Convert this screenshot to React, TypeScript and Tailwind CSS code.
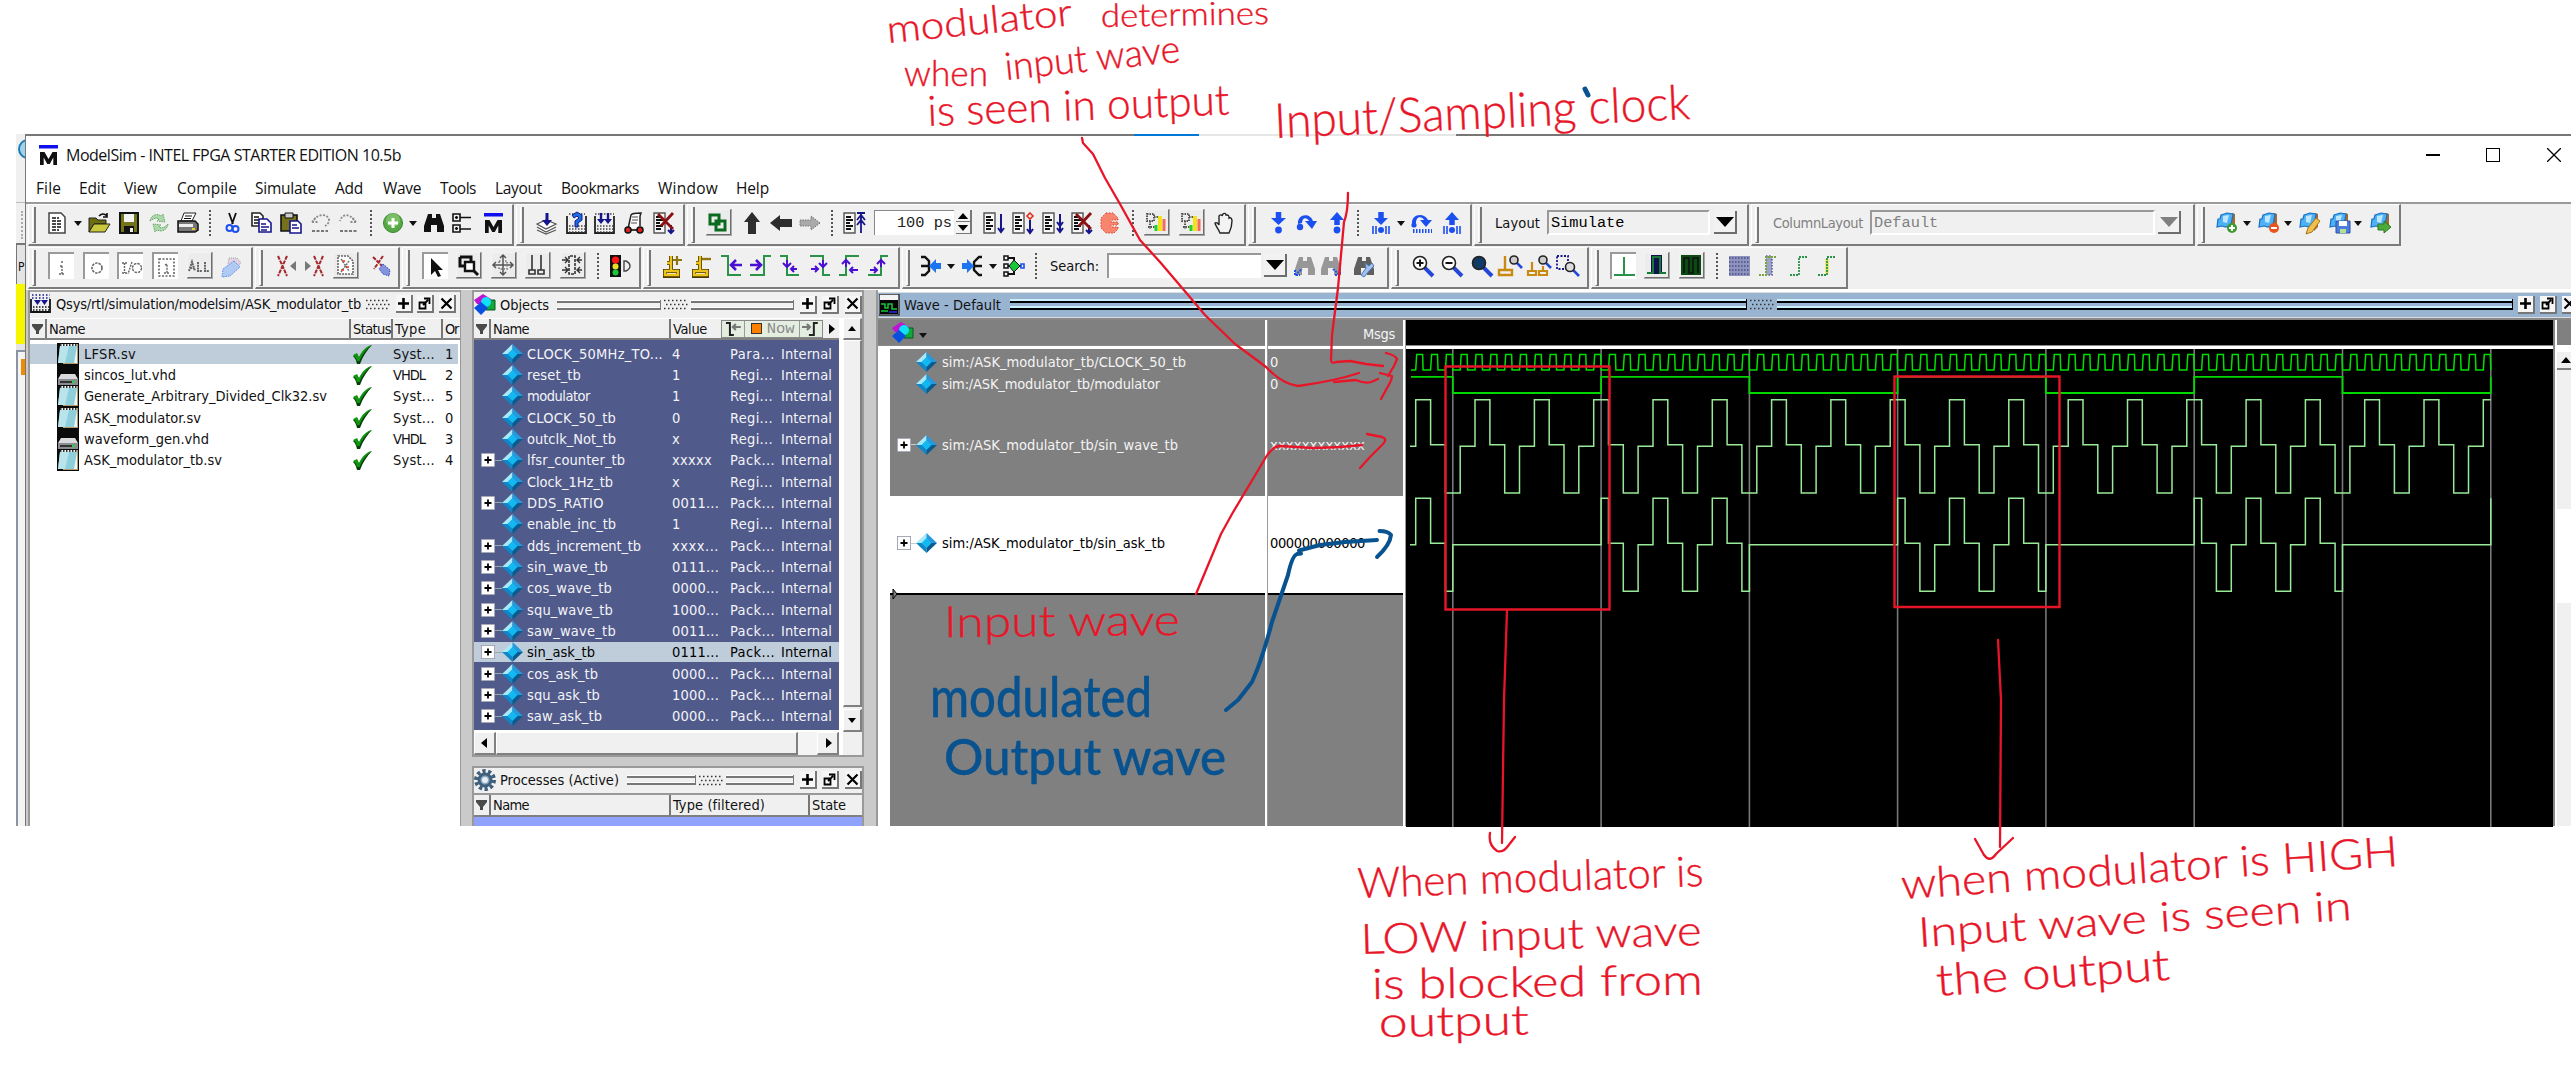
import { useLayoutEffect, useRef, useState } from "react";
import type { ReactNode } from "react";

/* Text whose tracking is tuned so that it fills a given width. */
function Fit({ w, children, className = "" }: { w: number; children: string; className?: string }) {
  const ref = useRef<HTMLSpanElement>(null);
  const [ls, setLs] = useState(0);
  useLayoutEffect(() => {
    if (ref.current) setLs((w - ref.current.getBoundingClientRect().width) / children.length);
  }, [w, children]);
  return (
    <span ref={ref} className={"inline-block whitespace-pre " + className} style={{ letterSpacing: ls }}>
      {children}
    </span>
  );
}

const Svg = ({ children, w = 22, h = 22 }: { children: ReactNode; w?: number; h?: number }) => (
  <svg width={w} height={h} viewBox={`0 0 ${w} ${h}`} fill="none" className="block shrink-0 overflow-visible">
    {children}
  </svg>
);
const P = ({ d, s = "#111", f = "none", w = 1.6, dash }: { d: string; s?: string; f?: string; w?: number; dash?: string }) => (
  <path d={d} stroke={s} fill={f} strokeWidth={w} strokeDasharray={dash} />
);
const NAVY = "#16168c";
const BLUE = "#1c4ff0";
const GRN = "#2b9348";
const PUR = "#4a0fd0";

const page = (
  <>
    <P d="M1 1H12V21H1Z" w={1.4} f="#f7f7f7" s="#555" />
    <P d="M3 5H8M3 8H10M3 11H7M3 14H10M3 17H8" w={2} />
  </>
);
const binoc = <path d="M5 2h4v4h4V2h4l4 12v6h-7v-7h-6v7H1v-6z" fill="#111" />;
const mag = (x: number, y: number, r: number, fill: string) => (
  <>
    <path d={`M${x + r * 0.6} ${y + r * 0.6}L${x + r * 2} ${y + r * 2}`} stroke="#2447d8" strokeWidth={r > 5 ? 4 : 2.6} />
    <circle cx={x} cy={y} r={r} fill={fill} stroke="#222" strokeWidth={1.6} />
  </>
);
const bookmark = (
  <>
    <path d="M17 1l3 1v13l-4 4V8z" fill="#a86a2c" />
    <path d="M6 3l6-2 6 1-2 11-5 2-4-1-5 1 1-8h2z" fill="#4db2f4" stroke="#1a6fc4" strokeWidth={1.2} />
    <path d="M8 4l6-1-2 8-4-1z" fill="#bfe6ff" />
  </>
);

const icons: Record<string, ReactNode> = {
  doc: (<><P d="M1 1H13L17 5V21H1Z" f="#fff" w={1.5} s="#444" /><P d="M4 6H11M4 9H14M4 12H13M4 15H14M4 18H11" w={1.5} dash="4 1" /></>),
  open: (<><path d="M1 6h7l2 2h8v4H6l-5 8z" fill="#6d6d10" stroke="#222" /><path d="M6 12h16l-5 8H1z" fill="#c8c83a" stroke="#222" /><P d="M11 4Q15 0 19 4M19 1V5H15" /></>),
  save: (<><path d="M1 1h18v20H1z" fill="#73731a" stroke="#111" strokeWidth={2} /><path d="M5 2h10v8H5z" fill="#f2f2f2" /><path d="M5 14h10v7H5z" fill="#111" /><path d="M11 16h3v4h-3z" fill="#eee" /></>),
  refresh: (<><path d="M2 9C3 3 9 1 13 4l2-2 2 8-8-1 2-2C8 5 5 7 2 9z" fill="#a9d8a9" stroke="#6aa36a" strokeDasharray="1.5 1" /><path d="M20 12c-1 7-7 8-11 6l-2 2-2-8 8 1-2 2c3 2 6 0 9-3z" fill="#a9d8a9" stroke="#6aa36a" strokeDasharray="1.5 1" /></>),
  print: (<><path d="M7 1h12l-4 8H4z" fill="#fff" stroke="#222" /><P d="M8 4H15M7 6.5H14" w={1} /><path d="M1 9h17l3 3v6l-3 2H1z" fill="#777" stroke="#111" strokeWidth={1.5} /><path d="M2 12h14v3H2z" fill="#eee" /><path d="M15 16h3v2h-3z" fill="#e8d02a" /></>),
  cut: (<><P d="M3 1L7 12M10 1L6 12" w={1.8} /><circle cx="3.500" cy="16" r="3" stroke={BLUE} strokeWidth="2" /><circle cx="9.500" cy="17" r="3" stroke={BLUE} strokeWidth="2" /></>),
  copy: (<><P d="M1 1H9L12 4V14H1Z" f="#fff" s="#222" /><P d="M3 5H8M3 8H9M3 11H8" w={1.3} /><P d="M8 7H16L20 11V20H8Z" f="#fff" s={NAVY} /><P d="M10 12H15M10 15H18M10 18H16" s={NAVY} w={1.3} /></>),
  paste: (<><path d="M1 3h16v16H1z" fill="#77701d" stroke="#111" strokeWidth={1.6} /><path d="M5 1h8v5H5z" fill="#ccc" stroke="#111" /><P d="M10 9H18L21 12V21H10Z" f="#fff" s={NAVY} /><P d="M12 13H17M12 16H19" s={NAVY} w={1.3} /></>),
  undo: (<><P d="M2 10L6 5M2 10H8M4 8C9 1 18 2 19 8C19 11 17 13 15 14" s="#888" dash="2 1.500" w={1.8} /><P d="M2 19H18" s="#777" dash="3 1.500" w={2} /></>),
  redo: (<><P d="M18 10L14 5M18 10H12M16 8C11 1 4 2 2 9" s="#888" dash="2 1.500" w={1.8} /><P d="M2 19H20" s="#777" dash="3 1.500" w={2} /></>),
  add: (<><circle cx="10" cy="11" r="9.500" fill="#57a844" stroke="#3a8632" /><circle cx="10" cy="8" r="7" fill="#8fd07c" opacity=".6" /><P d="M10 6V16M5 11H15" s="#fff" w={3} /></>),
  binoc,
  tree: (<><P d="M1 2H8V9H1ZM8 5.500H19M1 13H8V20H1ZM8 17H19M3 5.500H6M4.500 4V7M3 16.500H6M4.500 15V18" w={1.6} /></>),
  compile: (<><P d="M1 12L10 8L20 12L10 17ZM1 15L10 20L20 15M1 18L10 22L20 18" f="#fff" s="#555" w={1.2} /><P d="M11 1V11" s={NAVY} w={3} /><path d="M6 8h10l-5 6z" fill={NAVY} /></>),
  compall: (<><P d="M1 4V21H20V4" s="#222" w={1.8} /><P d="M3 14H19M3 17H19M3 20H19M3 2H19" w={1.6} s="#444" dash="1.500 1.500" /><path d="M6 3l5-3 5 3v5l-4 3v4H9V9l4-3-2-2-3 2z" fill="#1b6de0" stroke={NAVY} /></>),
  compdown: (<><P d="M1 4V21H20V4" s="#222" w={1.8} /><P d="M3 14H19M3 17H19M3 20H19M1 2H20" w={1.6} s="#444" dash="1.500 1.500" /><P d="M7 1V10M14 1V10" s={NAVY} w={2.4} /><path d="M3 7h8l-4 5zM10 7h8l-4 5z" fill={NAVY} /></>),
  glasses: (<><P d="M5 17L8 3Q9 1 18 1L17 4V14" f="#fff" s="#222" w={1.5} /><P d="M9 5H15M9 8H15M8 11H14" s="#888" /><circle cx="5" cy="18" r="3" fill="#d22" stroke="#111" strokeWidth="1.500" /><circle cx="17" cy="18" r="3" fill="#d22" stroke="#111" strokeWidth="1.500" /><P d="M8 18H14" /></>),
  brk: (<>{page}<P d="M18 13V21M15 18L18 21L21 18" s={NAVY} w={2} /><P d="M5 2L20 17M20 1L8 14" s="#8a1014" w={2.8} /></>),
  env: (<><P d="M3 4H12V13H3ZM9 10H18V19H9Z" s="#0a6b1e" w={3} /></>),
  up: <path d="M9 0l8 10h-4v12H5V10H1z" fill="#2d2d2d" />,
  left: <path d="M0 11L10 3v4h12v8H10v4z" fill="#2d2d2d" />,
  right: <path d="M21 11L12 4v4H1v6h11v4z" fill="#aaa" stroke="#777" strokeDasharray="1.500 1" />,
  restart: (<>{page}<P d="M18 2V21M14 8L18 3L22 8M14 13L18 8L22 13M14 1H22" s={NAVY} w={1.8} /></>),
  run: (<>{page}<P d="M18 2V20M15 16L18 20L21 16" s={NAVY} w={2} /></>),
  runc: (<>{page}<P d="M18 8V21M15 17L18 21L21 17" s={NAVY} w={2} /><P d="M18 1L21 4L18 7L15 4Z" s="#e0301e" /></>),
  runa: (<>{page}<P d="M18 2V20M15 10L18 14L21 10M15 16L18 20L21 16" s={NAVY} w={2} /></>),
  stop: <path d="M6 1h7l5 5v2h-7v2h7v3h-7v2h7v2l-4 4H6l-5-5V6z" fill="#f9856f" stroke="#d93c28" strokeDasharray="1.500 1.500" />,
  prof: (<><P d="M2 3H9V10H2ZM5 10V18M9 6H14M3 16H12" s="#555" dash="1.500 1" w={2} /><P d="M11 14V20" s="#22d422" w={3} /><P d="M15 5V20" s="#f1e21b" w={4} /><P d="M19 8V20" s="#f46a5c" w={3} /></>),
  hand: <path d="M6 21C4 16 1 13 1 11c1-1 3 0 4 2V4c1-2 3-1 3 0l1-2c1-1 3-1 3 1l1 0c2 0 2 1 2 3 2-1 3 1 3 3 0 5-1 8-3 12z" fill="#f3f3f3" stroke="#222" strokeWidth={1.4} />,
  stepin: (<><P d="M7.500 0V7" s={BLUE} w={5.5} /><path d="M0 6h15l-7.500 7z" fill={BLUE} /><circle cx="7.500" cy="18" r="3.400" fill={BLUE} /></>),
  stepover: (<><path d="M2 12C1 2 14 0 17 9h4l-5 8-7-8h4C11 5 6 5 6 11z" fill={BLUE} /><circle cx="4" cy="15" r="3.200" fill={BLUE} /></>),
  stepout: (<><P d="M7 13V6" s={BLUE} w={5.5} /><path d="M0 8h14L7 0z" fill={BLUE} /><circle cx="7" cy="18" r="3.400" fill={BLUE} /></>),
  stepin2: (<><P d="M9 0V7" s={BLUE} w={5.5} /><path d="M2 6h14l-7 7z" fill={BLUE} /><circle cx="9" cy="18" r="3" fill={BLUE} /><P d="M1 14V22M4 14V22M14 14V22M17 14V22" s={BLUE} /></>),
  stepover2: (<><path d="M2 12C1 2 14 0 18 8h4l-6 7-6-7h4C12 4 6 4 6 11z" fill={BLUE} /><circle cx="4" cy="13" r="2.600" fill={BLUE} /><P d="M3 19H22" s={BLUE} w={4} dash="1.500 1.500" /></>),
  stepout2: (<><P d="M9 13V6" s={BLUE} w={5.5} /><path d="M2 8h14L9 0z" fill={BLUE} /><circle cx="9" cy="18" r="3" fill={BLUE} /><P d="M1 14V22M4 14V22M14 14V22M17 14V22" s={BLUE} /></>),
  bmAdd: (<>{bookmark}<circle cx="17" cy="16" r="5" fill="#3f9a2f" /><P d="M17 13V19M14 16H20" s="#fff" w={1.8} /></>),
  bmDel: (<>{bookmark}<circle cx="17" cy="16" r="5" fill="#e8541c" /><P d="M14 16H20" s="#fff" w={2} /></>),
  bmEdit: (<>{bookmark}<path d="M18 6l4 3-8 11-6 2 2-6z" fill="#f0c04a" stroke="#a9741f" /></>),
  bmSave: (<>{bookmark}<path d="M8 9h14v12H8z" fill="#4a7fe0" stroke="#2b50a8" /><path d="M11 9h8v5h-8z" fill="#fff" /><path d="M12 17h6v4h-6z" fill="#b7e08c" /></>),
  bmGo: (<>{bookmark}<path d="M9 12h6V9l7 6-7 6v-3H9z" fill="#4dab3a" stroke="#2c7a20" /></>),
  fI: <P d="M10 6H12M11 10V18M9 10H12M8 18H14" s="#666" dash="2 1" w={1.4} />,
  fO: <circle cx="11" cy="12" r="5" stroke="#666" strokeWidth="1.600" strokeDasharray="2.500 1" />,
  fIO: (<><P d="M2 7H7M4.500 7V17M2 17H7M12 6L8 18" s="#666" dash="2 1" w={1.4} /><circle cx="17" cy="12" r="4.500" stroke="#666" strokeWidth="1.400" strokeDasharray="2.500 1" /></>),
  f1: (<><P d="M4 3H19V20H4Z" s="#666" dash="2 1.500" w={1.6} /><P d="M10 9L12 8V17M9 17H14" s="#666" dash="2 1" w={1.4} /></>),
  fAll: <P d="M1 17L4 8L7 17M2 14H6M10 8V17H14M17 8V17H21" s="#666" dash="2 .7" w={2} />,
  wand: (<><path d="M8 3h8l4 5-6 5-7-4z" fill="#e4cfe4" stroke="#9a9" strokeDasharray="1 1" /><path d="M13 6l6 6-10 9-8 1 1-8z" fill="#aecaf5" stroke="#5b8ee0" strokeDasharray="1.500 1" /></>),
  xl: (<><P d="M2 1L11 21M11 1L2 21" s="#a3262c" w={2} dash="4 1" /><path d="M20 6l-6 5 6 5z" fill="#777" /></>),
  xr: (<><P d="M10 1L19 21M19 1L10 21" s="#a3262c" w={2} dash="4 1" /><path d="M1 6l6 5-6 5z" fill="#777" /></>),
  xdoc: (<><P d="M4 2H14L19 7V20H4Z" f="#fff" s="#666" dash="2 1" /><P d="M7 5L15 17M15 7L7 18" s="#777" dash="2 1" /><P d="M8 7H11M12 13H15M7 16H10" s="#e0301e" /></>),
  xwand: (<><P d="M1 2L14 15M11 1L2 14" s="#a3262c" w={2} dash="4 1" /><path d="M11 9l7 6-1 6-6-2-4-5z" fill="#8593dc" stroke="#334bc0" strokeDasharray="1.500 1" /></>),
  cursor: <path d="M6 2v17l4-4 3 6 3-1-3-6h5z" fill="#111" />,
  zoomm: (<><P d="M3 3H14V12M3 3V12H8" w={3} /><P d="M8 8H17V17H8Z" w={2.4} f="#fff" /><P d="M17 17L21 21" w={3} /></>),
  pan: (<><P d="M11 1V21M1 11H21M8 4L11 1L14 4M8 18L11 21L14 18M4 8L1 11L4 14M18 8L21 11L18 14" s="#555" w={1.5} /><P d="M7 7H15V15H7Z" s="#777" dash="1.500 1.500" /></>),
  twoc: <P d="M6 1V16M15 1V16M3 16H9V20H3ZM12 16H18V20H12Z" s="#333" w={1.6} />,
  edge: (<><P d="M8 2V20H14V2Z" w={1.6} s="#333" dash="3 1" /><P d="M1 6H6M1 16H6M16 6H21M16 16H21M4 3L7 6L4 9M4 13L7 16L4 19M19 3L16 6L19 9M19 13L16 16L19 19" s="#333" w={1.4} /></>),
  traffic: (<><path d="M1 0h11v22H1z" fill="#111" /><circle cx="6.500" cy="5" r="3.600" fill="#ff1414" /><circle cx="6.500" cy="11.500" r="3" fill="#e6e02a" /><circle cx="6.500" cy="17.500" r="3" fill="#19c83a" /><P d="M15 6H17Q21 8 21 11Q21 14 17 16H15Z" s="#444" w={1.4} /></>),
  curAdd: (<><P d="M9 1V15M3 16H16V21H3ZM5 8H9" s="#4a3b00" w={4} /><P d="M9 1V15M3 16H16V20H3ZM5 8H9" s="#eec41c" w={2.4} /><P d="M15 1V10M11 5H20" s="#8f7410" w={2.2} /></>),
  curDel: (<><P d="M9 1V15M3 16H16V21H3ZM5 8H9" s="#4a3b00" w={4} /><P d="M9 1V15M3 16H16V20H3ZM5 8H9" s="#eec41c" w={2.4} /><P d="M11 4H20" s="#8f7410" w={2.4} /></>),
  e1: (<><P d="M0 1H7V20H20" s={GRN} w={2} /><P d="M21 10H11M15 5L10 10L15 15" s={PUR} w={2.6} /></>),
  e2: (<><P d="M1 20H15V1H22" s={GRN} w={2} /><P d="M1 10H11M7 5L12 10L7 15" s={PUR} w={2.6} /></>),
  e3: (<><P d="M1 1H8V20H20" s={GRN} w={2} /><P d="M8 5V12M4 8L8 12L12 8M18 14H12M15 11L12 14L15 17" s={PUR} w={2} /></>),
  e4: (<><P d="M1 1H14V20H21" s={GRN} w={2} /><P d="M14 5V12M10 8L14 12L18 8M2 14H9M6 11L9 14L6 17" s={PUR} w={2} /></>),
  e5: (<><P d="M1 20H8V1H21" s={GRN} w={2} /><P d="M8 12V5M4 9L8 5L12 9M20 15H12M15 12L12 15L15 18" s={PUR} w={2} /></>),
  e6: (<><P d="M1 20H14V1H21" s={GRN} w={2} /><P d="M14 12V5M10 9L14 5L18 9M3 15H10M7 12L10 15L7 18" s={PUR} w={2} /></>),
  b1: (<><P d="M1 2H5L9 6V16L5 20H1M1 11H9" w={2.4} /><path d="M21 8v6h-5v4l-7-7 7-7v4z" fill="#1c74f0" /></>),
  b2: (<><P d="M20 2H17L12 7V15L17 20H20M12 11H20" w={2.4} /><path d="M0 8v6h5v4l7-7-7-7v4z" fill="#1c74f0" /></>),
  b3: (<><P d="M5 3H11V19H5M5 11H18" w={2} /><P d="M1 1H5V5H1ZM1 17H5V21H1ZM1 9H5V13H1Z" w={1.5} /><P d="M18 9H21V13H18Z" s={BLUE} w={1.6} /><path d="M11 5l6 6-6 6-5-6z" fill="#19c83a" stroke="#111" /></>),
  bf1: (<><g opacity=".4">{binoc}</g><P d="M1 20L8 14M1 15V20H6" s={BLUE} w={2} dash="2 1" /></>),
  bf2: (<><g opacity=".4">{binoc}</g><P d="M13 14L20 20M20 14V20H15" s={BLUE} w={2} dash="2 1" /></>),
  bf3: (<><g opacity=".65">{binoc}</g><path d="M12 8l4 3 3-3 2 3-4 4-6 7-3-2 5-7z" fill="#9fc0f0" stroke="#5578b0" /></>),
  zin: (<>{mag(9, 8, 6.5, "#fff")}<P d="M9 4.500V11.500M5.500 8H12.500" w={2} /></>),
  zout: (<>{mag(9, 8, 6.5, "#fff")}<P d="M5.500 8H12.500" w={2} /></>),
  zfull: mag(9, 8, 6.5, "#123a66"),
  zc: (<>{mag(16, 5, 4, "#ccc")}<P d="M7 1V14M1 15H14V20H1Z" s="#c98a12" w={2.4} /></>),
  zc2: (<>{mag(16, 5, 4, "#ccc")}<P d="M5 7V15M16 11V15M1 16H9V20H1ZM12 16H20V20H12Z" s="#c98a12" w={2.2} /></>),
  zr: (<><P d="M1 1H12V14H1Z" s={NAVY} dash="2 1.500" w={1.8} />{mag(14, 12, 4.5, "#ddd")}</>),
  w1: <P d="M11 1V19M1 19H22" s={GRN} w={2} />,
  w2: (<><path d="M6 1h11v19H6z" fill="#12124d" /><P d="M2 19H8V3H15V19H21" s="#167a36" w={2} /></>),
  w3: (<><path d="M1 1h20v20H1z" fill="#0b4a12" /><P d="M4 19V4H9V19H13V4H18V19" s="#111" w={1.6} /></>),
  w4: (<><path d="M1 1h21v20H1z" fill="#8d93bd" /><P d="M1 3H22M1 7H22M1 11H22M1 15H22M1 19H22" s="#4b4f86" dash="1.500 1.500" /></>),
  w5: (<><P d="M8 1H14V20H8Z" s="#555a9a" f="#9da2c8" dash="1.500 1.500" /><P d="M1 20H8V2H19" s="#7aa33a" dash="2 1" w={2} /></>),
  w6: <P d="M1 20H10V2H19" s={GRN} dash="2 1" w={1.8} />,
  w7: (<><P d="M10 4V18" s="#e3dc2a" w={3} /><P d="M1 20H10V2H19" s={GRN} dash="2 1" w={1.8} /></>),
};

const Ic = ({ n }: { n: string }) => <Svg>{icons[n]}</Svg>;

const MLogo = () => (
  <Svg w={19} h={20}>
    <path d="M0 0h19v3.500H0z" fill="#1010ee" />
    <path d="M1 20V7h4.500l4 7 4-7H18v13h-3.700v-7.500L10.800 19H8.200l-3.500-6.500V20z" fill="#111" />
  </Svg>
);
const Caret = () => (
  <Svg w={7} h={22}>
    <path d="M0 9h8l-4 5z" fill="#111" />
  </Svg>
);
const Sep = () => <div className="h-[26px] w-0 border-l-2 border-dotted border-[#555]" />;
const Raised = ({ n, on }: { n: string; on?: boolean }) => (
  <div
    className={
      on
        ? "flex h-[27px] w-[26px] items-center justify-center border-l-2 border-t-2 border-[#9a9a9a] bg-white"
        : "flex h-[27px] w-[26px] items-center justify-center border-b-2 border-r-2 border-b-[#6e6e6e] border-r-[#6e6e6e] bg-[#ececec] outline outline-1 -outline-offset-1 outline-white/40"
    }
  >
    <Ic n={n} />
  </div>
);
const DropBtn = ({ off }: { off?: boolean }) => (
  <div className="flex h-[23px] w-[23px] items-center justify-center border-b-2 border-r-2 border-[#6e6e6e] bg-[#f2f2f2]">
    <svg width="18" height="10" viewBox="0 0 18 10">
      <path d="M0 0h18L9 10z" fill={off ? "#808080" : "#000"} />
    </svg>
  </div>
);

type Item = [number, number, ReactNode];

/* A toolbar strip with a grip; items are [left, width, node] and flow left to right. */
function Strip({ x, w, items }: { x: number; w: number; items: Item[] }) {
  let end = x + 8;
  return (
    <div
      className="mr-[2px] flex h-[42px] shrink-0 items-center border-b-2 border-r-2 border-l border-t border-b-[#7b7b7b] border-r-[#7b7b7b] border-l-white border-t-white bg-[#f0f0f0]"
      style={{ width: w }}
    >
      <div className="ml-[3px] h-[36px] w-[4px] border-b border-l border-r-2 border-b-[#777] border-l-white border-r-[#777]" />
      {items.map(([ix, iw, node], i) => {
        const ml = ix - end;
        end = ix + iw;
        return (
          <div key={i} className="flex shrink-0 items-center -translate-y-[2px]" style={{ marginLeft: ml, width: iw }}>
            {node}
          </div>
        );
      })}
    </div>
  );
}
const ic = (x: number, n: string): Item => [x, 22, <Ic n={n} />];
const caret = (x: number): Item => [x, 7, <Caret />];
const sep = (x: number): Item => [x, 2, <Sep />];
const btn = (x: number, n: string, on?: boolean): Item => [x, 26, <Raised n={n} on={on} />];

const row1: { x: number; w: number; items: Item[] }[] = [
  { x: 28, w: 486, items: [ic(48, "doc"), caret(74), ic(88, "open"), ic(119, "save"), ic(148, "refresh"), ic(177, "print"), sep(209), ic(226, "cut"), ic(251, "copy"), ic(280, "paste"), ic(310, "undo"), ic(338, "redo"), sep(370), ic(383, "add"), caret(409), ic(423, "binoc"), ic(452, "tree"), [484, 19, <MLogo />]] },
  { x: 516, w: 169, items: [ic(536, "compile"), ic(566, "compall"), ic(594, "compdown"), ic(623, "glasses"), ic(653, "brk")] },
  {
    x: 687, w: 559,
    items: [
      btn(706, "env"), ic(743, "up"), ic(770, "left"), ic(799, "right"), sep(831), ic(843, "restart"),
      [874, 80, <div className="flex h-[25px] w-[80px] items-center justify-end border-l border-t border-[#888] bg-white pr-[2px] font-[Liberation_Mono,monospace] text-[15.300px] text-[#222]">100 ps</div>],
      [956, 16, (
        <div className="flex h-[25px] w-[16px] flex-col">
          {["M1 8h12L7 1z", "M1 1h12L7 8z"].map((d) => (
            <div key={d} className="flex h-[12px] w-[16px] items-center justify-center border-b border-r-2 border-[#777] bg-[#f4f4f4]">
              <svg width="12" height="8" viewBox="0 0 14 9"><path d={d} fill="#000" /></svg>
            </div>
          ))}
        </div>
      )],
      ic(983, "run"), ic(1012, "runc"), ic(1042, "runa"), ic(1071, "brk"), ic(1100, "stop"), sep(1132), btn(1144, "prof"), btn(1179, "prof"), ic(1214, "hand"),
    ],
  },
  { x: 1248, w: 224, items: [ic(1271, "stepin"), ic(1296, "stepover"), ic(1330, "stepout"), sep(1357), ic(1372, "stepin2"), caret(1397), ic(1410, "stepover2"), ic(1443, "stepout2")] },
  {
    x: 1474, w: 275,
    items: [
      [1495, 45, <Fit w={45}>Layout</Fit>],
      [1547, 163, <div className="flex h-[25px] w-[163px] items-center border-2 border-b-white border-l-[#999] border-r-white border-t-[#999] pl-[2px] font-[Liberation_Mono,monospace] text-[15.300px] text-black">Simulate</div>],
      [1714, 23, <DropBtn />],
    ],
  },
  {
    x: 1751, w: 444,
    items: [
      [1773, 90, <Fit w={90} className="text-[#808080]">ColumnLayout</Fit>],
      [1870, 285, <div className="flex h-[25px] w-[285px] items-center border-2 border-b-white border-l-[#999] border-r-white border-t-[#999] pl-[2px] font-[Liberation_Mono,monospace] text-[15.300px] text-[#808080]">Default</div>],
      [2158, 23, <DropBtn off />],
    ],
  },
  { x: 2197, w: 204, items: [ic(2215, "bmAdd"), caret(2243), ic(2257, "bmDel"), caret(2284), ic(2298, "bmEdit"), ic(2328, "bmSave"), caret(2354), ic(2369, "bmGo")] },
];
const row2: { x: number; w: number; items: Item[] }[] = [
  { x: 28, w: 225, items: [btn(48, "fI", true), btn(83, "fO", true), btn(117, "fIO", true), btn(152, "f1", true), btn(187, "fAll"), ic(221, "wand")] },
  { x: 255, w: 145, items: [ic(276, "xl"), ic(304, "xr"), btn(333, "xdoc"), ic(372, "xwand")] },
  { x: 402, w: 239, items: [btn(422, "cursor", true), btn(456, "zoomm"), btn(491, "pan"), btn(525, "twoc"), btn(560, "edge"), sep(597), ic(609, "traffic")] },
  { x: 643, w: 257, items: [ic(662, "curAdd"), ic(691, "curDel"), ic(721, "e1"), ic(749, "e2"), ic(779, "e3"), ic(809, "e4"), ic(838, "e5"), ic(867, "e6")] },
  {
    x: 902, w: 487,
    items: [
      ic(920, "b1"), caret(947), ic(962, "b2"), caret(989), ic(1003, "b3"), sep(1035),
      [1050, 49, <Fit w={49}>Search:</Fit>],
      [1107, 154, <div className="h-[25px] w-[154px] border-l-2 border-t-2 border-[#999] bg-white" />],
      [1264, 23, <DropBtn />],
      ic(1294, "bf1"), ic(1320, "bf2"), ic(1353, "bf3"),
    ],
  },
  { x: 1391, w: 198, items: [ic(1411, "zin"), ic(1440, "zout"), ic(1470, "zfull"), ic(1498, "zc"), ic(1527, "zc2"), ic(1556, "zr")] },
  { x: 1591, w: 257, items: [btn(1610, "w1", true), btn(1644, "w2"), btn(1679, "w3"), sep(1716), ic(1728, "w4"), ic(1758, "w5"), ic(1789, "w6"), ic(1817, "w7")] },
];

const menus: [string, number, number][] = [
  ["File", 36, 25], ["Edit", 79, 27], ["View", 124, 33], ["Compile", 177, 60], ["Simulate", 255, 61], ["Add", 335, 28],
  ["Wave", 383, 38], ["Tools", 440, 36], ["Layout", 495, 47], ["Bookmarks", 561, 78], ["Window", 658, 60], ["Help", 736, 33],
];

/* ---- dock panel parts ---- */
const DockBtn = ({ d, lead }: { d: "plus" | "float" | "x"; lead: string }) => (
  <div className={"flex h-[18px] w-[17px] shrink-0 items-center justify-center border-b-2 border-r-2 border-[#777] bg-[#f6f6f6] " + lead}>
    <svg width="13" height="13" viewBox="0 0 13 13" fill="none" stroke="#000">
      {d === "plus" && <path d="M6.500 1V12M1 6.500H12" strokeWidth="2.600" />}
      {d === "float" && <path d="M1.500 5.500H7.500V11.500H1.500ZM5 8L10 3M6 1.500H11.500V7" strokeWidth="1.800" />}
      {d === "x" && <path d="M1.500 1.500L11.500 11.500M11.500 1.500L1.500 11.500" strokeWidth="2.200" />}
    </svg>
  </div>
);
const Rails = () => (
  <div className="flex h-[10px] flex-1 flex-col justify-between border-r border-[#777]">
    <div className="h-[3px] border-b-2 border-t border-b-[#777] border-t-white" />
    <div className="h-[3px] border-b-2 border-t border-b-[#777] border-t-white" />
  </div>
);
const Dots = () => (
  <svg width="24" height="11" viewBox="0 0 24 11" className="mx-[3px] shrink-0">
    <path d="M0 1.500H24M2 5.500H24M0 9.500H24" stroke="#333" strokeWidth="1.500" strokeDasharray="1.500 2.500" />
  </svg>
);
const ShapesIcon = () => (
  <Svg w={22} h={21}>
    <path d="M9 0l8 5-4 5H3L0 6z" fill="#c014d4" />
    <path d="M12 6h9v10h-9z" fill="#12a83c" stroke="#055a1c" />
    <circle cx="12" cy="8" r="5" fill="#12e0f4" />
    <path d="M7 8l7 6-7 7-7-7z" fill="#0a50e0" />
  </Svg>
);
const GearIcon = () => (
  <Svg w={22} h={22}>
    <circle cx="11" cy="11" r="9" stroke="#3f5f7d" strokeWidth="4" strokeDasharray="3.200 2.450" />
    <circle cx="11" cy="11" r="6" fill="#8aa9c4" stroke="#3f5f7d" strokeWidth="3" />
    <circle cx="11" cy="11" r="3" fill="#e8eef4" />
  </Svg>
);
const FilterCell = () => (
  <div className="flex h-full w-[17px] shrink-0 items-center justify-center border-r-2 border-[#777]">
    <svg width="11" height="10" viewBox="0 0 11 10"><path d="M0 0h11v2L7 7v3H4V7L0 2z" fill="#4a4a4a" /></svg>
  </div>
);
const Diamond = () => (
  <svg width="21" height="20" viewBox="0 0 21 20" className="block shrink-0">
    <path d="M10.500 0L0 10H6L10.500 5.500Z" fill="#a6e9fb" />
    <path d="M10.500 0L21 10H15L10.500 5.500Z" fill="#2599dc" />
    <path d="M10.500 20L0 10H6L10.500 14.500Z" fill="#0f86c6" />
    <path d="M10.500 20L21 10H15L10.500 14.500Z" fill="#0a5c90" />
    <path d="M10.500 5L15.500 10L10.500 15L5.500 10Z" fill="#12b8f2" />
  </svg>
);
const PlusBox = () => (
  <svg width="14" height="14" viewBox="0 0 14 14" className="block shrink-0">
    <path d="M0 0H14V14H0Z" fill="#fdfdfd" stroke="#8a8fa0" strokeWidth="1.500" />
    <path d="M7 3.500V10.500M3.500 7H10.500" stroke="#000" strokeWidth="1.800" />
  </svg>
);
const FileIcon = ({ vhd }: { vhd?: boolean }) => (
  <svg width="22" height="22" viewBox="0 0 22 22" className="block shrink-0">
    <path d="M0 0h22v22H0z" fill="#0a0a0a" />
    {vhd ? (
      <>
        <path d="M4 10h14l3 5H1z" fill="#d9d9de" />
        <path d="M1 15h20v6H1z" fill="#8b8b92" />
        <path d="M3 17h14v2H3z" fill="#333" />
        <path d="M15 16.500h2.500v2.500H15z" fill="#2bd53d" />
      </>
    ) : (
      <>
        <path d="M3 1h18v20H6z" fill="#b59a6a" />
        <path d="M3 1h17v19H6z" fill="#f1f4f4" />
        <path d="M3 3h17l-3 17H1z" fill="#8fcfdc" />
        <path d="M3 3h9l-4 17H1z" fill="#b9e4ec" />
        <path d="M3 2H20" stroke="#333" strokeWidth="2" strokeDasharray="1.500 1.500" />
      </>
    )}
  </svg>
);
const Check = () => (
  <svg width="21" height="20" viewBox="0 0 21 20" className="block">
    <path d="M1 12L5 10L7 14C10 8 14 3 20 1C15 6 11 12 8 20H5C4 16 3 14 1 12Z" fill="#0a3d0e" />
    <path d="M1 11L5 9L7 13C10 7 14 2 20 1C14 5 10 11 7.500 17H5C4 14 3 12 1 11Z" fill="#0f960f" />
  </svg>
);
const Arrow = ({ d }: { d: string }) => (
  <svg width="10" height="10" viewBox="0 0 10 10"><path d={d} fill="#000" /></svg>
);
const SB = "flex items-center justify-center border-b-2 border-r-2 border-l border-t border-b-[#808080] border-r-[#808080] border-l-white border-t-white bg-[#f0f0f0] ";

const files: [string, number, boolean, string, string][] = [
  ["LFSR.sv", 52, false, "Syst...", "1"],
  ["sincos_lut.vhd", 92, true, "VHDL", "2"],
  ["Generate_Arbitrary_Divided_Clk32.sv", 243, false, "Syst...", "5"],
  ["ASK_modulator.sv", 117, false, "Syst...", "0"],
  ["waveform_gen.vhd", 125, true, "VHDL", "3"],
  ["ASK_modulator_tb.sv", 138, false, "Syst...", "4"],
];
const objs: [string, number, string, string, boolean][] = [
  ["CLOCK_50MHz_TO...", 136, "4", "Para...", false],
  ["reset_tb", 54, "1", "Regi...", false],
  ["modulator", 63, "1", "Regi...", false],
  ["CLOCK_50_tb", 89, "0", "Regi...", false],
  ["outclk_Not_tb", 89, "x", "Regi...", false],
  ["lfsr_counter_tb", 98, "xxxxx", "Pack...", true],
  ["Clock_1Hz_tb", 86, "x", "Regi...", false],
  ["DDS_RATIO", 77, "0011...", "Pack...", true],
  ["enable_inc_tb", 89, "1", "Regi...", false],
  ["dds_increment_tb", 114, "xxxx...", "Pack...", true],
  ["sin_wave_tb", 81, "0111...", "Pack...", true],
  ["cos_wave_tb", 85, "0000...", "Pack...", true],
  ["squ_wave_tb", 86, "1000...", "Pack...", true],
  ["saw_wave_tb", 89, "0011...", "Pack...", true],
  ["sin_ask_tb", 68, "0111...", "Pack...", true],
  ["cos_ask_tb", 71, "0000...", "Pack...", true],
  ["squ_ask_tb", 73, "1000...", "Pack...", true],
  ["saw_ask_tb", 75, "0000...", "Pack...", true],
];
const valW = (v: string) => (v.length === 1 ? 8 : v.length === 5 ? 40 : 47);

function ProjectPanel() {
  return (
    <div className="flex w-[433px] shrink-0 flex-col border-l-2 border-r border-l-[#999] border-r-[#999] bg-white">
      <div className="flex h-[28px] items-center border-t-2 border-[#a5a5a5] bg-[#f0f0f0] pb-[2px]">
        <Svg w={21} h={20}>
          <P d="M1 5V18H20V5" w={1.8} /><P d="M3 13H19M3 16H19" dash="1.500 1.500" /><P d="M2 1H20M2 4H20" s={NAVY} dash="1.500 2" w={1.5} /><path d="M4 6h7l-3.500 5zM11 6h7l-3.500 5z" fill={NAVY} />
        </Svg>
        <Fit w={305} className="ml-[5px] mr-[2px]">Qsys/rtl/simulation/modelsim/ASK_modulator_tb</Fit>
        <Dots />
        <DockBtn d="plus" lead="ml-[3px]" /><DockBtn d="float" lead="ml-[4px]" /><DockBtn d="x" lead="ml-[5px]" />
      </div>
      <div className="flex h-[22px] items-center border-b-2 border-t border-b-[#808080] border-t-white bg-[#f0f0f0]">
        <FilterCell />
        <div className="h-full w-[304px] shrink-0 border-r-2 border-[#777] pl-[2px]"><Fit w={36}>Name</Fit></div>
        <div className="h-full w-[42px] shrink-0 border-r-2 border-[#777] pl-[2px]"><Fit w={38}>Status</Fit></div>
        <div className="h-full w-[50px] shrink-0 border-r-2 border-[#777] pl-[2px]"><Fit w={31}>Type</Fit></div>
        <div className="h-full pl-[2px]"><Fit w={13}>Or</Fit></div>
      </div>
      <div className="pt-[3px]">
        {files.map(([name, w, vhd, type, n], i) => (
          <div key={name} className="flex h-[21.330px] items-center">
            <div className={"mr-[2px] flex h-[20px] flex-1 items-center pl-[27px] " + (i === 0 ? "bg-[#bfcddb]" : "")}>
              <FileIcon vhd={vhd} />
              <div className="w-[273px] shrink-0 pl-[5px]"><Fit w={w}>{name}</Fit></div>
              <div className="w-[41px] shrink-0"><Check /></div>
              <div className="w-[52px] shrink-0"><Fit w={type === "VHDL" ? 32 : 42}>{type}</Fit></div>
              <Fit w={8}>{n}</Fit>
            </div>
          </div>
        ))}
      </div>
    </div>
  );
}

function ObjectsPanel() {
  return (
    <div className="flex h-[467px] flex-col border-2 border-[#999] bg-white">
      <div className="flex h-[26px] shrink-0 items-center bg-[#f0f0f0] pb-px">
        <ShapesIcon />
        <Fit w={49} className="ml-[4px] mr-[8px]">Objects</Fit>
        <Rails /><Dots /><Rails />
        <DockBtn d="plus" lead="ml-[6px]" /><DockBtn d="float" lead="ml-[5px]" /><DockBtn d="x" lead="ml-[6px]" />
      </div>
      <div className="flex flex-1">
        <div className="flex w-[365px] shrink-0 flex-col">
          <div className="flex h-[22px] items-center border-b-2 border-t border-b-[#808080] border-t-white bg-[#f0f0f0]">
            <FilterCell />
            <div className="h-full w-[180px] border-r-2 border-[#777] pl-[2px]"><Fit w={36}>Name</Fit></div>
            <div className="w-[50px] pl-[2px]"><Fit w={34}>Value</Fit></div>
            <div className="flex h-[18px] w-[102px] items-center border border-[#888] bg-[#e3eee0]">
              <svg width="22" height="16" viewBox="0 0 22 16" fill="none" stroke="#222"><path d="M4 2H8V14H12" strokeWidth="2" /><path d="M19 6H12M14 3L11 6L14 9" strokeWidth="2.200" stroke="#777" /></svg>
              <div className="flex h-full w-[57px] items-center border-l border-r border-[#999] pl-[6px]">
                <div className="h-[11px] w-[11px] border border-[#333] bg-[#ff8000]" />
                <span className="ml-[5px] font-[Liberation_Mono,monospace] text-[15.500px] text-[#8a8a8a]">Now</span>
              </div>
              <svg width="22" height="16" viewBox="0 0 22 16" fill="none" stroke="#222"><path d="M9 14H14V2H18" strokeWidth="2" /><path d="M2 6H9M7 3L10 6L7 9" strokeWidth="2.200" stroke="#777" /></svg>
            </div>
            <div className="ml-[5px]"><Arrow d="M1 0L7 5L1 10Z" /></div>
          </div>
          <div className="h-[390px] bg-[#505a8b] pt-[3px] text-[#f4f4f8]">
            {objs.map(([name, w, val, type, plus]) => (
              <div key={name} className="flex h-[21.330px] items-center">
                <div className={"flex h-[20px] flex-1 items-center " + (name === "sin_ask_tb" ? "bg-[#bfcddb] text-black" : "")}>
                  <div className="flex w-[28px] shrink-0 items-center pl-[7px]">
                    {plus && <><PlusBox /><div className="h-px flex-1 bg-[#9aa]" /></>}
                  </div>
                  <Diamond />
                  <div className="w-[149px] shrink-0 pl-[4px]"><Fit w={w}>{name}</Fit></div>
                  <div className="w-[58px] shrink-0"><Fit w={valW(val)}>{val}</Fit></div>
                  <div className="w-[51px] shrink-0"><Fit w={type === "Regi..." ? 43 : 45}>{type}</Fit></div>
                  <Fit w={51}>Internal</Fit>
                </div>
              </div>
            ))}
          </div>
          <div className="mt-[2px] flex h-[23px] bg-[#f4f4f4]">
            <div className={SB + "w-[22px]"}><Arrow d="M7 0L1 5L7 10Z" /></div>
            <div className={SB + "w-[302px]"} />
            <div className="flex-1" />
            <div className={SB + "w-[22px]"}><Arrow d="M3 0L9 5L3 10Z" /></div>
          </div>
        </div>
        <div className="ml-[4px] flex flex-1 flex-col bg-[#f0f0f0]">
          <div className={SB + "h-[22px]"}><Arrow d="M1 7L5 2L9 7Z" /></div>
          <div className={SB + "h-[367px]"} />
          <div className={SB + "mt-[2px] h-[23px]"}><Arrow d="M1 3L5 8L9 3Z" /></div>
        </div>
      </div>
    </div>
  );
}

function ProcessesPanel() {
  return (
    <div className="mt-[9px] flex h-[60px] flex-col border-2 border-b-0 border-[#999] bg-white">
      <div className="flex h-[25px] items-center bg-[#f0f0f0] pb-px">
        <GearIcon />
        <Fit w={119} className="ml-[4px] mr-[8px]">Processes (Active)</Fit>
        <Rails /><Dots /><Rails />
        <DockBtn d="plus" lead="ml-[6px]" /><DockBtn d="float" lead="ml-[5px]" /><DockBtn d="x" lead="ml-[6px]" />
      </div>
      <div className="flex h-[24px] items-center border-b-2 border-t-2 border-b-[#808080] border-t-[#999] bg-[#f0f0f0]">
        <FilterCell />
        <div className="h-full w-[180px] border-r-2 border-[#777] pl-[2px]"><Fit w={36}>Name</Fit></div>
        <div className="h-full w-[139px] border-r-2 border-[#777] pl-[2px]"><Fit w={92}>Type (filtered)</Fit></div>
        <div className="pl-[2px]"><Fit w={34}>State</Fit></div>
      </div>
      <div className="flex-1 bg-[#8ea2fe]" />
    </div>
  );
}

/* ---- waveforms ---- */
const OX = 1406;
const OY = 348;
const G0 = 1452.8;
const GP = 148.28;
const CK = 14.828;
const END = G0 + 7 * GP;
const grid = Array.from({ length: 8 }, (_, k) => G0 + k * GP);
const pt = (x: number, y: number) => `${(x - OX).toFixed(1)} ${(y - OY).toFixed(1)}`;

function clockPath() {
  let d = `M${pt(1411, 369)}`;
  for (let x = G0 - 2.5 * CK; x < END; x += CK) {
    d += `L${pt(x, 369)}L${pt(x + 1, 353.5)}L${pt(x + CK / 2 - 0.5, 353.5)}L${pt(x + CK / 2, 369)}`;
  }
  return d;
}
function modPath() {
  let d = `M${pt(1411, 375.8)}`;
  let y = 375.8;
  grid.forEach((x) => {
    d += `L${pt(x, y)}`;
    y = y < 380 ? 392 : 375.8;
    d += `L${pt(x, y)}`;
  });
  return d;
}
const level = (x: number) => {
  const m = Math.floor((x - (G0 - 2.5 * CK)) / CK + 0.001);
  return m < 0 ? 3 : m % 4;
};
function sinePath(ys: number[], masked: boolean) {
  const edges = [1410, END];
  for (let x = G0 - 2.5 * CK; x < END; x += CK) edges.push(x);
  if (masked) edges.push(...grid);
  edges.sort((a, b) => a - b);
  let d = "";
  for (let i = 0; i < edges.length - 1; i++) {
    const mid = (edges[i] + edges[i + 1]) / 2;
    const low = masked && mid > G0 && Math.floor((mid - G0) / GP) % 2 === 0;
    const y = low ? ys[3] : ys[level(mid)];
    d += `${d ? "L" : "M"}${pt(edges[i], y)}L${pt(edges[i + 1], y)}`;
  }
  if (masked) d += `L${pt(END, ys[0])}`;
  return d;
}

const Waves = () => (
  <svg width="1147" height="478" viewBox="0 0 1147 478" fill="none" className="block bg-black">
    {grid.map((x) => (
      <path key={x} d={`M${pt(x, 348)}V478`} stroke="#777" strokeWidth="1.600" />
    ))}
    <path d={clockPath()} stroke="#00e000" strokeWidth="1.500" />
    <path d={modPath()} stroke="#00d800" strokeWidth="1.800" />
    <path d={sinePath([398.7, 443.7, 492, 445.3], false)} stroke="#98ea98" strokeWidth="1.500" />
    <path d={sinePath([497.3, 542.3, 590.3, 543.7], true)} stroke="#98ea98" strokeWidth="1.500" />
  </svg>
);

const Signal = ({ name, w, plus, cls }: { name: string; w: number; plus?: boolean; cls: string }) => (
  <div className={"flex items-center pl-[7px] " + cls}>
    <div className="flex w-[19px] shrink-0 items-center">{plus && <><PlusBox /><div className="h-px flex-1 bg-[#ccc]" /></>}</div>
    <Diamond />
    <Fit w={w} className="ml-[5px]">{name}</Fit>
  </div>
);

function WavePanel() {
  return (
    <div className="flex min-w-0 flex-1 flex-col border-l-2 border-[#999] bg-white">
      <div className="mt-[2px] flex h-[26px] shrink-0 items-center border-y border-[#ddd] bg-[#99b4d1] pb-px">
        <svg width="21" height="22" viewBox="0 0 21 22" className="ml-px shrink-0">
          <path d="M0 0h20v21H0z" fill="#f4f4f4" stroke="#333" strokeWidth="1.500" />
          <path d="M1 6h18v14H1z" fill="#050505" />
          <path d="M2 10h4v4h3v-4h4v5h5M2 17h7" stroke="#19c83a" strokeWidth="1.500" fill="none" />
          <path d="M10 18h8" stroke="#2a2af0" strokeWidth="1.500" />
        </svg>
        <Fit w={97} className="ml-[4px] mr-[9px]">Wave - Default</Fit>
        <WaveRails /><Dots /><WaveRails />
        <DockBtn d="plus" lead="ml-[5px]" /><DockBtn d="float" lead="ml-[5px]" />
        <div className="w-[14px] shrink-0 overflow-hidden"><DockBtn d="x" lead="ml-[5px]" /></div>
      </div>
      <div className="h-[2px] shrink-0 bg-[#888]" />
      <div className="flex min-h-0 flex-1 text-[#f4f4f4]">
        <div className="flex w-[387px] shrink-0 flex-col">
          <div className="flex h-[25px] shrink-0 items-center bg-[#808080] pl-[14px]"><ShapesIcon /><div className="ml-[5px] pt-[4px]"><Caret /></div></div>
          <div className="h-[4px] shrink-0 border-t border-[#888] bg-white" />
          <div className="ml-[12px] flex flex-1 flex-col">
            <div className="h-[147px] bg-[#808080]">
              <Signal name="sim:/ASK_modulator_tb/CLOCK_50_tb" w={244} cls="h-[25px]" />
              <Signal name="sim:/ASK_modulator_tb/modulator" w={218} cls="h-[20px]" />
              <Signal name="sim:/ASK_modulator_tb/sin_wave_tb" w={236} plus cls="h-[101px]" />
            </div>
            <Signal name="sim:/ASK_modulator_tb/sin_ask_tb" w={223} plus cls="h-[97px] bg-white pb-[3px] text-black" />
            <div className="relative flex-1 border-t-2 border-black bg-[#808080]">
              <svg width="6" height="10" viewBox="0 0 6 10" className="absolute -top-[6px] left-[2px]"><path d="M1 0L5 5L1 10Z" fill="#808080" stroke="#000" /></svg>
            </div>
          </div>
        </div>
        <div className="w-[3px] shrink-0 border-r border-[#999] bg-white" />
        <div className="flex w-[135px] shrink-0 flex-col">
          <div className="flex h-[25px] shrink-0 items-center justify-end bg-[#808080] pr-[8px] pt-[3px]"><Fit w={32}>Msgs</Fit></div>
          <div className="h-[4px] shrink-0 border-t border-[#888] bg-white" />
          <div className="flex h-[147px] flex-col bg-[#808080] pl-[2px]">
            <div className="flex h-[25px] items-center"><Fit w={8}>0</Fit></div>
            <div className="flex h-[20px] items-center"><Fit w={8}>0</Fit></div>
            <div className="flex h-[101px] items-center"><Fit w={95}>xxxxxxxxxxxx</Fit></div>
          </div>
          <div className="flex h-[97px] items-center bg-white pb-[3px] pl-[2px] text-black"><Fit w={95}>000000000000</Fit></div>
          <div className="flex-1 border-t-2 border-black bg-[#808080]" />
        </div>
        <div className="w-[3px] shrink-0 border-r border-[#999] bg-white" />
        <div className="w-[1147px] shrink-0">
          <div className="h-[25px] bg-black" />
          <div className="h-[4px] border-t border-[#888] bg-white" />
          <Waves />
        </div>
        <div className="w-[4px] shrink-0 border-l-2 border-[#888] bg-white" />
        <div className="flex flex-1 flex-col bg-[#f0f0f0]">
          <div className="h-[25px] bg-[#808080]" />
          <div className="h-[7px] bg-white" />
          <div className="flex h-[18px] items-center justify-center border-b-2 border-[#808080] bg-[#f0f0f0] pl-[4px]"><Arrow d="M0 8L5 2L10 8Z" /></div>
          <div className="mt-[139px] h-[94px] bg-white" />
        </div>
      </div>
    </div>
  );
}
const WaveRails = () => (
  <div className="flex h-[11px] flex-1 flex-col justify-between border-r border-black">
    <div className="h-[4px] border-b-2 border-t-2 border-b-black border-t-[#cdeefc]" />
    <div className="h-[4px] border-b-2 border-t-2 border-b-black border-t-[#cdeefc]" />
  </div>
);

/* ---- pen notes laid over the page ---- */
const RED = "#e81528";
const INK = "#07528f";
const notes: [string, number, number, number, number, number, string][] = [
  ["modulator", 888, 43, 186, 38, -5.5, RED],
  ["determines", 1101, 27, 168, 32, -1, RED],
  ["when", 904, 86, 84, 36, 0, RED],
  ["input wave", 1006, 80, 176, 38, -6, RED],
  ["is seen in output", 928, 126, 302, 42, -2.2, RED],
  ["Input/Sampling clock", 1275, 138, 416, 48, -2.6, RED],
  ["Input wave", 944, 637, 236, 43, -0.5, RED],
  ["When modulator is", 1358, 898, 346, 42, -2, RED],
  ["LOW input wave", 1361, 954, 341, 42, -1.5, RED],
  ["is blocked from", 1372, 999, 331, 42, -0.8, RED],
  ["output", 1379, 1037, 150, 42, -1, RED],
  ["when modulator is HIGH", 1902, 899, 498, 42, -3.8, RED],
  ["Input wave is seen in", 1919, 947, 434, 41, -3.6, RED],
  ["the output", 1937, 996, 234, 44, -4, RED],
  ["modulated", 930, 717, 222, 56, 0, INK],
  ["Output wave", 944, 775, 282, 50, 0, INK],
];
const red = [
  "M1082 138L1083 143L1093 154L1105 178L1120 204L1140 240L1160 262L1183 289L1205 315L1235 344L1250 355L1266 367Q1282 384 1298 386Q1335 381 1359 373",
  "M1334 382L1356 380Q1366 384 1371 382L1378 379M1380 373L1392 376Q1392 380 1387 388L1381 399",
  "M1348 193Q1348 212 1344 222L1338 288L1332 335L1331 360Q1331 364 1336 362L1350 361L1366 364L1383 366M1386 353Q1395 355 1397 359L1394 366L1388 376",
  "M1196 594L1221 534L1232 514L1266 457Q1273 446 1280 446L1313 448L1340 447L1362 445M1367 434L1382 437Q1388 439 1383 444L1370 457L1360 468",
  "M1507 610L1504 700L1502 843M1490 833Q1488 845 1497 851Q1503 853 1508 846L1515 837",
  "M1998 640L2001 700L2000 847M1975 839L1984 855Q1990 863 1996 854L2013 838",
];

const Notes = () => (
  <svg width="2571" height="1084" viewBox="0 0 2571 1084" fill="none" strokeLinecap="round" strokeLinejoin="round" className="absolute inset-0">
    {red.map((d) => (
      <path key={d} d={d} stroke={RED} strokeWidth="2.300" />
    ))}
    <path d="M1445.500 366.500H1609.500V609.500H1445.500ZM1894.500 376.500H2059.500V607H1894.500Z" stroke={RED} strokeWidth="2.400" strokeLinejoin="miter" />
    <path d="M1226 710L1238 700L1252 682Q1262 660 1272 622L1288 575Q1292 556 1297 554L1301 553.500M1299 550.500L1320 545L1345 542L1377 540" stroke={INK} strokeWidth="4" />
    <path d="M1379.500 531Q1388 531 1391 535Q1390 545 1377 557" stroke={INK} strokeWidth="4" />
    <path d="M1585 89L1588 95" stroke={INK} strokeWidth="5" />
    {notes.map(([t, x, y, w, size, rot, c]) => (
      <text
        key={t}
        x={x}
        y={y}
        textLength={w}
        lengthAdjust="spacingAndGlyphs"
        fontSize={size}
        fill={c}
        stroke={c}
        strokeWidth={0.4}
        transform={`rotate(${rot} ${x} ${y})`}
        className={c === INK ? "font-[Lato,sans-serif] font-medium" : "font-[Lato,sans-serif] font-light"}
      >
        {t}
      </text>
    ))}
  </svg>
);

export default function App() {
  let mEnd = 26;
  return (
    <div className="relative h-[1084px] w-[2571px] overflow-hidden bg-white pl-[16px] pt-[134px] font-[DejaVu_Sans_Condensed,DejaVu_Sans,sans-serif] text-[14.500px] leading-[20px] text-[#111] [font-stretch:condensed]">
      <div className="flex h-[692px]">
        {/* window behind */}
        <div className="flex w-[10px] shrink-0 flex-col overflow-hidden border-r border-[#777] bg-[#f0f0f0] [font-stretch:normal]">
          <div className="h-[68px] shrink-0 pl-[2px] pt-[5px]"><div className="h-[20px] w-[20px] rounded-full border-2 border-[#1d7fb0] bg-[#9fd3ec]" /></div>
          <div className="h-[41px] shrink-0 border-t border-[#bbb] pl-[5px] pt-[8px]"><div className="h-[28px] border-l-2 border-dotted border-[#aaa]" /></div>
          <div className="h-[41px] shrink-0 border-l border-t-2 border-[#777] bg-[#e4e4e4] pl-px pt-[12px] text-[12px]">P</div>
          <div className="h-[60px] shrink-0 bg-[#f6f600]" />
          <div className="h-[8px] shrink-0 border-b-2 border-[#8a94a4] bg-[#e4e4e4]" />
          <div className="flex-1 border-l-2 border-[#8a94a4] bg-[#f4f4f4] pl-[3px] pt-[7px]"><div className="h-[16px] bg-[#f08a00]" /></div>
        </div>

        {/* simulator window */}
        <div className="flex min-w-0 flex-1 flex-col bg-white">
          <div className="flex h-[2px] shrink-0">
            <div className="w-[1108px] bg-[#777]" /><div className="w-[65px] bg-[#0078d7]" /><div className="w-[257px] bg-[#e6e6e6]" /><div className="flex-1 bg-[#777]" />
          </div>
          <div className="flex h-[38px] shrink-0 items-center pl-[13px] font-[Open_Sans,sans-serif] text-[16px] [font-stretch:normal]">
            <MLogo />
            <Fit w={335} className="ml-[8px]">ModelSim - INTEL FPGA STARTER EDITION 10.5b</Fit>
            <div className="ml-auto flex items-center pr-[10px]">
              <div className="h-[1.500px] w-[14px] bg-black" />
              <div className="ml-[46px] h-[14px] w-[14px] border-[1.500px] border-black" />
              <svg className="ml-[47px]" width="14" height="14" viewBox="0 0 14 14"><path d="M0 0L14 14M14 0L0 14" stroke="#000" strokeWidth="1.300" /></svg>
            </div>
          </div>
          <div className="flex h-[28px] shrink-0 items-center font-[Open_Sans,sans-serif] text-[15.500px] [font-stretch:normal]">
            {menus.map(([t, x, w]) => {
              const ml = x - mEnd;
              mEnd = x + w;
              return (
                <div key={t} className="shrink-0" style={{ marginLeft: ml, width: w }}><Fit w={w}>{t}</Fit></div>
              );
            })}
          </div>
          <div className="h-[2px] shrink-0 bg-[#9a9a9a]" />
          <div className="flex h-[42px] shrink-0 bg-[#f0f0f0] pl-[2px]">{row1.map((g) => <Strip key={g.x} {...g} />)}</div>
          <div className="flex h-[43px] shrink-0 bg-[#f0f0f0] pl-[2px] pt-px">{row2.map((g) => <Strip key={g.x} {...g} />)}</div>
          <div className="flex min-h-0 flex-1 border-t border-white bg-[#cacaca] pl-[2px]">
            <ProjectPanel />
            <div className="ml-[11px] mr-[12px] flex w-[392px] shrink-0 flex-col">
              <ObjectsPanel />
              <ProcessesPanel />
            </div>
            <WavePanel />
          </div>
        </div>
      </div>
      <Notes />
    </div>
  );
}
